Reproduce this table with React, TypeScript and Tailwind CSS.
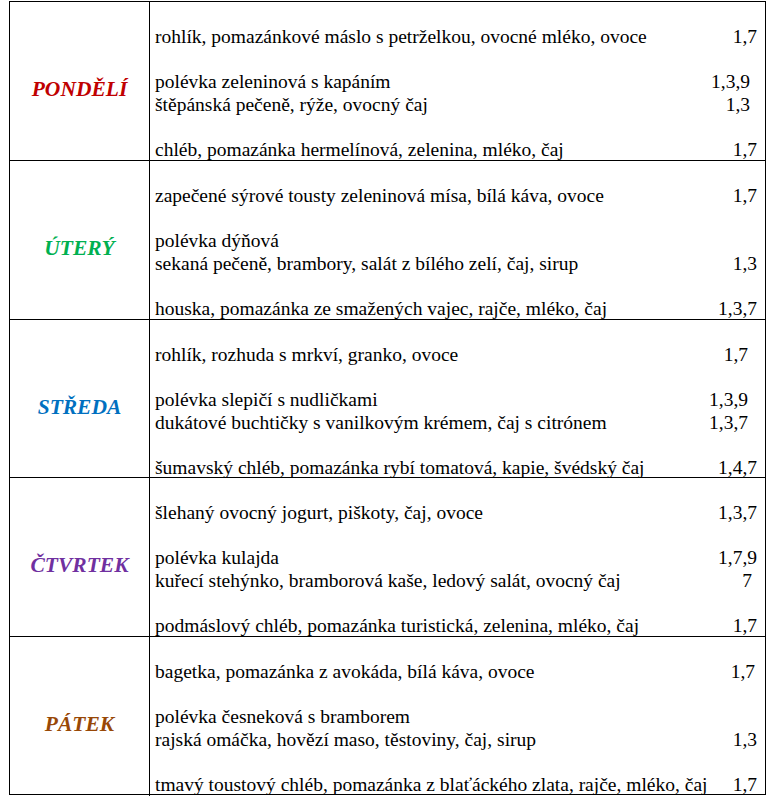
// Weekly menu table (jídelníček)

type Line = { text: string; alg?: string; pr?: string }

interface Day {
  name: string
  color: string
  h: string
  lines: (Line | null)[]
}

const days: Day[] = [
  {
    name: 'PONDĚLÍ',
    color: 'text-[#c00000]',
    h: 'h-[159px]',
    lines: [
      { text: 'rohlík, pomazánkové máslo s petrželkou, ovocné mléko, ovoce', alg: '1,7' },
      null,
      { text: 'polévka zeleninová s kapáním', alg: '1,3,9', pr: 'pr-[15px]' },
      { text: 'štěpánská pečeně, rýže, ovocný čaj', alg: '1,3', pr: 'pr-[15px]' },
      null,
      { text: 'chléb, pomazánka hermelínová, zelenina, mléko, čaj', alg: '1,7' },
    ],
  },
  {
    name: 'ÚTERÝ',
    color: 'text-[#00b050]',
    h: 'h-[159px]',
    lines: [
      { text: 'zapečené sýrové tousty zeleninová mísa, bílá káva, ovoce', alg: '1,7' },
      null,
      { text: 'polévka dýňová' },
      { text: 'sekaná pečeně, brambory, salát z bílého zelí, čaj, sirup', alg: '1,3' },
      null,
      { text: 'houska, pomazánka ze smažených vajec, rajče, mléko, čaj', alg: '1,3,7' },
    ],
  },
  {
    name: 'STŘEDA',
    color: 'text-[#0070c0]',
    h: 'h-[158px]',
    lines: [
      { text: 'rohlík, rozhuda s mrkví, granko, ovoce', alg: '1,7', pr: 'pr-[17px]' },
      null,
      { text: 'polévka slepičí s nudličkami', alg: '1,3,9', pr: 'pr-[17px]' },
      { text: 'dukátové buchtičky s vanilkovým krémem, čaj s citrónem', alg: '1,3,7', pr: 'pr-[17px]' },
      null,
      { text: 'šumavský chléb, pomazánka rybí tomatová, kapie, švédský čaj', alg: '1,4,7' },
    ],
  },
  {
    name: 'ČTVRTEK',
    color: 'text-[#7030a0]',
    h: 'h-[159px]',
    lines: [
      { text: 'šlehaný ovocný jogurt, piškoty, čaj, ovoce', alg: '1,3,7' },
      null,
      { text: 'polévka kulajda', alg: '1,7,9' },
      { text: 'kuřecí stehýnko, bramborová kaše, ledový salát, ovocný čaj', alg: '7', pr: 'pr-[13px]' },
      null,
      { text: 'podmáslový chléb, pomazánka turistická, zelenina, mléko, čaj', alg: '1,7' },
    ],
  },
  {
    name: 'PÁTEK',
    color: 'text-[#984806]',
    h: 'h-[157px]',
    lines: [
      { text: 'bagetka, pomazánka z avokáda, bílá káva, ovoce', alg: '1,7', pr: 'pr-[10px]' },
      null,
      { text: 'polévka česneková s bramborem' },
      { text: 'rajská omáčka, hovězí maso, těstoviny, čaj, sirup', alg: '1,3' },
      null,
      { text: 'tmavý toustový chléb, pomazánka z blaťáckého zlata, rajče, mléko, čaj', alg: '1,7' },
    ],
  },
]

export default function App() {
  return (
    <div className="min-h-[796px] bg-white pt-px pl-[9px] font-serif text-black">
      <div className="w-[757px] border border-black [font-family:Liberation_Serif,serif]">
        {days.map((day, i) => (
          <div
            key={day.name}
            className={`grid grid-cols-[139px_1px_1fr] ${day.h} ${i < days.length - 1 ? 'border-b border-black' : ''}`}
          >
            {/* Day name */}
            <div className={`pt-[76px] text-center text-[21.5px] leading-[23px] font-bold italic ${day.color}`}>
              {day.name}
            </div>
            <div className="bg-black" />

            {/* Meals */}
            <div className="flex flex-col pt-[24px] pl-[5px] text-[19.5px] leading-[22.5px]">
              {day.lines.map((line, j) =>
                line ? (
                  <div key={j} className={`flex justify-between whitespace-nowrap ${line.pr ?? 'pr-[8px]'}`}>
                    <span>{line.text}</span>
                    {line.alg && <span>{line.alg}</span>}
                  </div>
                ) : (
                  <div key={j} className="h-[22.5px]" />
                )
              )}
            </div>
          </div>
        ))}
      </div>
    </div>
  )
}
